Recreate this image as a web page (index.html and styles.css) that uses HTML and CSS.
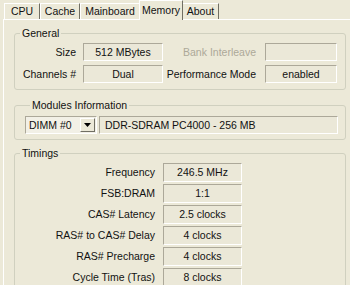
FILE: index.html
```html
<!DOCTYPE html>
<html lang="en">
<head>
  <meta charset="UTF-8">
  <title>CPU-Z Memory</title>
  <link rel="stylesheet" href="styles.css">
</head>
<body>
  <div class="tabs">
    <div class="tab" style="width:36px">CPU</div>
    <div class="tab" style="width:40px">Cache</div>
    <div class="tab" style="width:60px">Mainboard</div>
    <div class="tab active" style="width:44px">Memory</div>
    <div class="tab" style="width:37px">About</div>
  </div>

  <div class="panel">
    <fieldset class="group general">
      <legend>General</legend>
      <div class="label">Size</div>
      <div class="field">512 MBytes</div>
      <div class="label disabled">Bank Interleave</div>
      <div class="field"></div>
      <div class="label">Channels #</div>
      <div class="field">Dual</div>
      <div class="label">Performance Mode</div>
      <div class="field">enabled</div>
    </fieldset>

    <fieldset class="group modules">
      <legend>Modules Information</legend>
      <div class="combo">
        <span class="combo-text">DIMM #0</span>
        <span class="combo-btn">
          <svg width="7" height="4" viewBox="0 0 7 4"><path d="M0 0h7L3.5 4z" fill="#000"/></svg>
        </span>
      </div>
      <div class="field left">DDR-SDRAM PC4000 - 256 MB</div>
    </fieldset>

    <fieldset class="group timings">
      <legend>Timings</legend>
      <div class="label">Frequency</div>
      <div class="field">246.5 MHz</div>
      <div class="label">FSB:DRAM</div>
      <div class="field">1:1</div>
      <div class="label">CAS# Latency</div>
      <div class="field">2.5 clocks</div>
      <div class="label">RAS# to CAS# Delay</div>
      <div class="field">4 clocks</div>
      <div class="label">RAS# Precharge</div>
      <div class="field">4 clocks</div>
      <div class="label">Cycle Time (Tras)</div>
      <div class="field">8 clocks</div>
    </fieldset>
  </div>
</body>
</html>
```

FILE: styles.css
```css
body {
  margin: 0;
  background: #ece9d8;
  color: #111;
  font-family: "Liberation Sans", Arial, sans-serif;
  font-size: 10.5px;
  overflow: hidden;
}

.tabs {
  display: flex;
  align-items: flex-end;
  height: 19px;
  padding-left: 4px;
}

.tab {
  box-sizing: border-box;
  height: 16px;
  line-height: 15px;
  text-align: center;
  border-top: 1px solid #fff;
  border-left: 1px solid #fff;
  border-right: 1px solid #716f64;
  background: #ece9d8;
}

.tab.active {
  height: 20px;
  line-height: 18px;
  margin: 0 -1px -1px -1px;
  position: relative;
  z-index: 1;
}

.panel {
  border-top: 1px solid #fff;
  border-left: 1px solid #fff;
  margin-left: 3px;
  height: 280px;
  padding: 7px 0 0 10px;
}

.group {
  width: 332px;
  box-sizing: border-box;
  margin: 0;
  border: 1px solid #d0d0bf;
  border-radius: 3px;
  padding: 0;
}

.group legend {
  padding: 0 2px;
  margin-left: 5px;
  line-height: 12px;
}

.field {
  box-sizing: border-box;
  height: 18px;
  line-height: 16px;
  text-align: center;
  background: #ebe8d8;
  border: 1px solid;
  border-color: #aca899 #fff #fff #aca899;
  white-space: nowrap;
}

.field.left {
  text-align: left;
  padding-left: 5px;
}

.label {
  text-align: right;
  line-height: 18px;
  white-space: nowrap;
}

.label.disabled {
  color: #aca899;
}

.general {
  display: grid;
  grid-template-columns: 68px 80px 102px 72px;
  row-gap: 4px;
  padding: 4px 0 6px 0;
}

.general .label {
  padding-right: 7px;
}

.general .label:nth-of-type(3),
.general .label:nth-of-type(7) {
  padding-right: 9px;
}

.modules {
  margin-top: 9px;
  display: flex;
  gap: 2px;
  padding: 5px 7px 5px 10px;
}

.combo {
  box-sizing: border-box;
  width: 72px;
  height: 18px;
  display: flex;
  align-items: center;
  background: #f2f0e6;
  border: 1px solid;
  border-color: #aca899 #fff #fff #aca899;
}

.combo-text {
  flex: 1;
  padding-left: 3px;
}

.combo-btn {
  box-sizing: border-box;
  width: 15px;
  height: 14px;
  margin-right: 1px;
  display: flex;
  align-items: center;
  justify-content: center;
  background: #ece9d8;
  border: 1px solid;
  border-color: #fff #716f64 #716f64 #fff;
}

.modules .field {
  flex: 1;
}

.timings {
  margin-top: 7px;
  display: grid;
  grid-template-columns: 148px 79px;
  row-gap: 2px;
  padding: 4px 0 20px 0;
}

.timings .label {
  padding-right: 8px;
  line-height: 19px;
}

.timings .field {
  height: 19px;
  line-height: 17px;
}
```
